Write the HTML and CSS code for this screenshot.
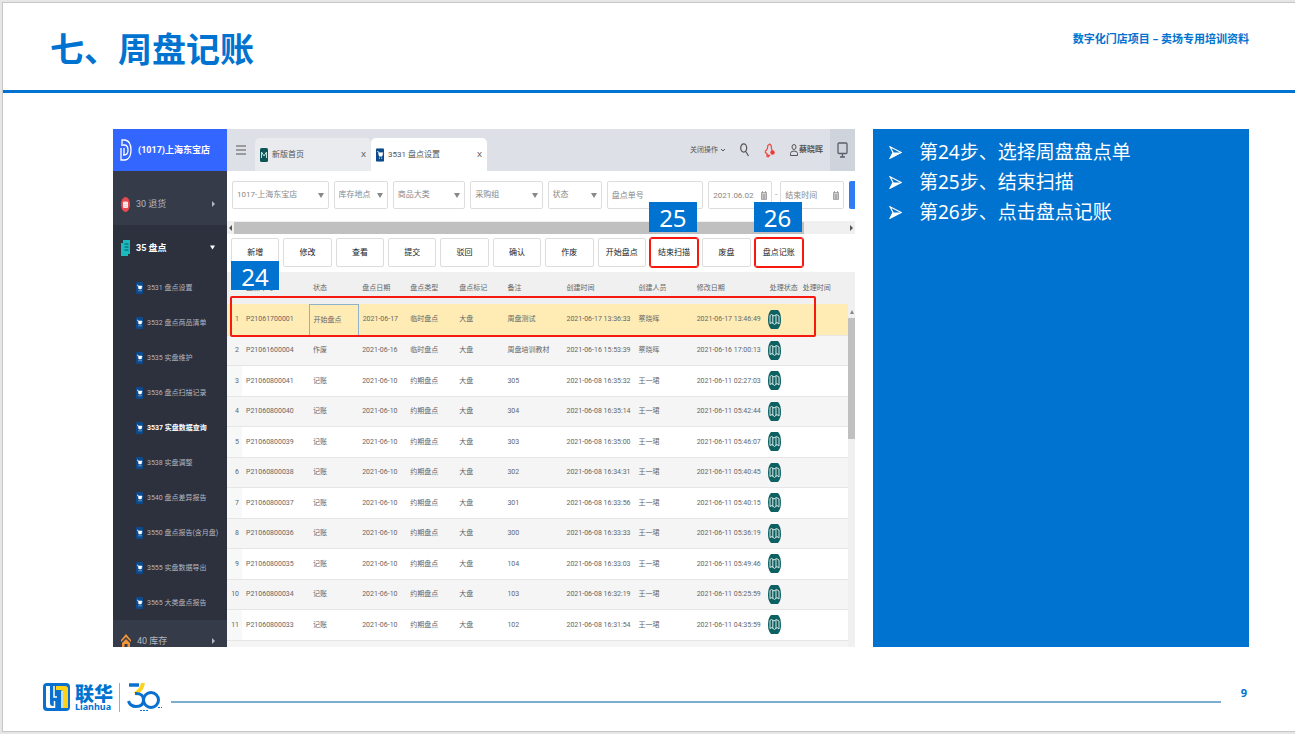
FILE: index.html
```html
<!DOCTYPE html>
<html lang="zh-CN">
<head>
<meta charset="utf-8">
<title>七、周盘记账</title>
<link rel="stylesheet" href="styles.css">
</head>
<body>
<svg class="sprite" aria-hidden="true">
  <symbol id="cart" viewBox="0 0 7 12"><rect width="7" height="12" rx="1" fill="#0d4a8c"/><path d="M1 3h1l.8 4h2.5L6 4H2.3" fill="#fff" stroke="#fff" stroke-width=".5"/><circle cx="3" cy="8.7" r=".5" fill="#fff"/><circle cx="5" cy="8.7" r=".5" fill="#fff"/></symbol>
  <symbol id="map" viewBox="0 0 13 19"><path d="M3 0h7q3 3 3 9.500t-3 9.500h-7q-3-3-3-9.500t3-9.500z" fill="#0e6163"/><path d="M2 5.500 3.500 4.500 6 6 8.500 4.500 11 6M2 13.500 4 12.500 6.500 14.500 9 12.500 11 14M2 5.500v8M4.800 5v8.500M8 5v8.500M11 6v8" fill="none" stroke="#d5e8e6" stroke-width="1"/></symbol>
  <symbol id="down" viewBox="0 0 6 5"><path d="M0 0h6L3 5z" fill="currentColor"/></symbol>
  <symbol id="right" viewBox="0 0 3 6"><path d="M0 0l3 3-3 3z" fill="currentColor"/></symbol>
  <symbol id="cal" viewBox="0 0 6 9"><path d="M.5 1.500h5v7h-5zM.5 3h5M1.500 0v2M4.500 0v2M.5 5h5M.5 7h5M2.200 3v5M3.800 3v5" fill="none" stroke="#888" stroke-width=".7"/></symbol>
  <symbol id="bullet" viewBox="0 0 13 13"><path d="M1 .7 12.300 6.500 1 12.300 4 6.500z" fill="none" stroke="#fff" stroke-width="1.200"/><path d="M4 6.500h8.300L1 12.300z" fill="#fff"/></symbol>
</svg>
<div class="slide">
  <header class="slide-head">
    <h1>七、周盘记账</h1>
    <p>数字化门店项目 – 卖场专用培训资料</p>
  </header>

  <main class="content">
    <section class="app" aria-label="盘点设置">
      <nav class="side">
        <div class="brand">
          <svg width="12" height="22" viewBox="0 0 12 22" fill="none" stroke="#fff" stroke-width="1.300"><path d="M2 5V1h3q6 1 6 10t-6 10H1V9"/><path d="M1 6h3q4 0 4 5t-4 5h-1M4 9v7"/></svg>
          <span>(1017)上海东宝店</span>
        </div>
        <a class="group first" href="#"><svg width="9" height="15" viewBox="0 0 9 15"><ellipse cx="4.500" cy="7.500" rx="4.500" ry="7.500" fill="#e8494f"/><path d="M2.500 5h4v5.500h-4zM2.500 6.500h4M2.500 8.500h4" fill="#f7c6c8" stroke="#fff" stroke-width=".8"/></svg><span>30 退货</span><svg class="caret" width="3" height="6"><use href="#right"/></svg></a>
        <a class="group open" href="#"><svg width="9" height="16" viewBox="0 0 9 16"><path d="M2 0h7v14H7v2H0V3h2z" fill="#19b9bd"/><path d="M3.500 4h4M3.500 7h4M3.500 10h4" stroke="#0c5560" stroke-width="1"/></svg><span>35 盘点</span><svg class="caret" width="5" height="5"><use href="#down"/></svg></a>
        <ul>
          <li><a href="#"><svg><use href="#cart"/></svg>3531 盘点设置</a></li>
          <li><a href="#"><svg><use href="#cart"/></svg>3532 盘点商品清单</a></li>
          <li><a href="#"><svg><use href="#cart"/></svg>3535 实盘维护</a></li>
          <li><a href="#"><svg><use href="#cart"/></svg>3536 盘点扫描记录</a></li>
          <li><a class="current" href="#"><svg><use href="#cart"/></svg>3537 实盘数据查询</a></li>
          <li><a href="#"><svg><use href="#cart"/></svg>3538 实盘调整</a></li>
          <li><a href="#"><svg><use href="#cart"/></svg>3540 盘点差异报告</a></li>
          <li><a href="#"><svg><use href="#cart"/></svg>3550 盘点报告(含月盘)</a></li>
          <li><a href="#"><svg><use href="#cart"/></svg>3555 实盘数据导出</a></li>
          <li><a href="#"><svg><use href="#cart"/></svg>3565 大类盘点报告</a></li>
        </ul>
        <a class="group last" href="#"><svg width="10" height="14" viewBox="0 0 10 14"><path d="M0 6 5 0l5 6v2L5 3 0 8zM1 9l4-4 4 4v5H6.500V10h-3v4H1z" fill="#f0953a"/></svg><span>40 库存</span><svg class="caret" width="3" height="6"><use href="#right"/></svg></a>
      </nav>

      <div class="work">
        <div class="tabs">
          <button class="icon-btn menu" aria-label="菜单"><svg width="10" height="10" viewBox="0 0 10 10" stroke="#555" stroke-width="1.200"><path d="M0 1h10M0 5h10M0 9h10"/></svg></button>
          <div class="tab"><svg width="8" height="14" viewBox="0 0 8 14"><rect width="8" height="14" rx="1.500" fill="#0e5558"/><path d="M1.500 10V4L4 8l2.500-4v6" fill="none" stroke="#bfe5e2" stroke-width="1"/></svg><span>新版首页</span><button aria-label="关闭 新版首页">X</button></div>
          <div class="tab active"><svg width="8" height="14" viewBox="0 0 7 12"><use href="#cart"/></svg><span>3531 盘点设置</span><button aria-label="关闭 盘点设置">X</button></div>
          <div class="tools">
            <button class="ops">关闭操作 <svg width="4" height="3" viewBox="0 0 4 3"><path d="M0 0l2 2 2-2" fill="none" stroke="#555"/></svg></button>
            <button class="icon-btn" aria-label="搜索"><svg width="9" height="14" viewBox="0 0 9 14" fill="none" stroke="#555" stroke-width="1.200"><ellipse cx="3.700" cy="5" rx="3" ry="4.200"/><path d="M5.800 8.500 8.500 13"/></svg></button>
            <button class="icon-btn" aria-label="通知"><svg width="11" height="15" viewBox="0 0 11 15"><path d="M.8 8.500q3-1.500 3-6l2-1.500 1.500 2q-.5 2 1 5M1 9l4 4 1-1M3 11.500v2l2 .5" fill="none" stroke="#f0453c" stroke-width="1.200"/><circle cx="8.500" cy="9.500" r="2.200" fill="#f0392f"/></svg></button>
            <button class="user"><svg width="8" height="12" viewBox="0 0 8 12" fill="none" stroke="#555"><ellipse cx="4" cy="3" rx="2" ry="2.500"/><path d="M.5 11.500V9.500q0-2.500 3.500-2.500t3.500 2.500v2z"/></svg>蔡晓晖</button>
            <button class="icon-btn screen" aria-label="屏幕"><svg width="11" height="16" viewBox="0 0 11 16" fill="none" stroke="#59606b" stroke-width="1.300"><rect x="1" y="1" width="9" height="10.500" rx="1"/><path d="M5.500 12v3M3 15h5"/></svg></button>
          </div>
        </div>

        <form class="filters">
          <label class="field w98"><select aria-label="门店"><option>1017-上海东宝店</option></select><svg width="6" height="5"><use href="#down"/></svg></label>
          <label class="field w54"><select aria-label="库存地点"><option>库存地点</option></select><svg width="6" height="5"><use href="#down"/></svg></label>
          <label class="field w73"><select aria-label="商品大类"><option>商品大类</option></select><svg width="6" height="5"><use href="#down"/></svg></label>
          <label class="field w73"><select aria-label="采购组"><option>采购组</option></select><svg width="6" height="5"><use href="#down"/></svg></label>
          <label class="field w54"><select aria-label="状态"><option>状态</option></select><svg width="6" height="5"><use href="#down"/></svg></label>
          <label class="field w98"><input type="text" aria-label="盘点单号" placeholder="盘点单号"></label>
          <label class="field w64"><input type="text" aria-label="开始时间" value="2021.06.02"><svg width="6" height="9"><use href="#cal"/></svg></label>
          <span class="dash">-</span>
          <label class="field w64"><input type="text" aria-label="结束时间" placeholder="结束时间"><svg width="6" height="9"><use href="#cal"/></svg></label>
          <button class="query" type="button" aria-label="查询"></button>
        </form>

        <div class="hscroll"><svg class="flip" width="3" height="6"><use href="#right"/></svg><i></i><svg width="3" height="6"><use href="#right"/></svg></div>

        <div class="actions">
          <button>新增</button><button>修改</button><button>查看</button><button>提交</button><button>驳回</button><button>确认</button><button>作废</button><button>开始盘点</button>
          <button class="marked">结束扫描<b class="step">25</b></button>
          <button>废盘</button>
          <button class="marked">盘点记账<b class="step">26</b></button>
        </div>

        <div class="grid">
          <table>
            <colgroup><col class="c15"><col class="c67"><col class="c49"><col class="c48"><col class="c49"><col class="c48"><col class="c59"><col class="c72"><col class="c58"><col class="c73"><col class="c33"><col class="c56"></colgroup>
            <thead><tr><th></th><th>盘点单号</th><th>状态</th><th>盘点日期</th><th>盘点类型</th><th>盘点标记</th><th>备注</th><th>创建时间</th><th>创建人员</th><th>修改日期</th><th>处理状态</th><th>处理时间</th></tr></thead>
            <tbody>
              <tr class="selected"><td>1</td><td>P21061700001</td><td class="focus">开始盘点</td><td>2021-06-17</td><td>临时盘点</td><td>大盘</td><td>周盘测试</td><td>2021-06-17 13:36:33</td><td>蔡晓晖</td><td>2021-06-17 13:46:49</td><td><svg><use href="#map"/></svg></td><td></td></tr>
              <tr><td>2</td><td>P21061600004</td><td>作废</td><td>2021-06-16</td><td>临时盘点</td><td>大盘</td><td>周盘培训教材</td><td>2021-06-16 15:53:39</td><td>蔡晓晖</td><td>2021-06-16 17:00:13</td><td><svg><use href="#map"/></svg></td><td></td></tr>
              <tr><td>3</td><td>P21060800041</td><td>记账</td><td>2021-06-10</td><td>约期盘点</td><td>大盘</td><td>305</td><td>2021-06-08 16:35:32</td><td>王一珺</td><td>2021-06-11 02:27:03</td><td><svg><use href="#map"/></svg></td><td></td></tr>
              <tr><td>4</td><td>P21060800040</td><td>记账</td><td>2021-06-10</td><td>约期盘点</td><td>大盘</td><td>304</td><td>2021-06-08 16:35:14</td><td>王一珺</td><td>2021-06-11 05:42:44</td><td><svg><use href="#map"/></svg></td><td></td></tr>
              <tr><td>5</td><td>P21060800039</td><td>记账</td><td>2021-06-10</td><td>约期盘点</td><td>大盘</td><td>303</td><td>2021-06-08 16:35:00</td><td>王一珺</td><td>2021-06-11 05:46:07</td><td><svg><use href="#map"/></svg></td><td></td></tr>
              <tr><td>6</td><td>P21060800038</td><td>记账</td><td>2021-06-10</td><td>约期盘点</td><td>大盘</td><td>302</td><td>2021-06-08 16:34:31</td><td>王一珺</td><td>2021-06-11 05:40:45</td><td><svg><use href="#map"/></svg></td><td></td></tr>
              <tr><td>7</td><td>P21060800037</td><td>记账</td><td>2021-06-10</td><td>约期盘点</td><td>大盘</td><td>301</td><td>2021-06-08 16:33:56</td><td>王一珺</td><td>2021-06-11 05:40:15</td><td><svg><use href="#map"/></svg></td><td></td></tr>
              <tr><td>8</td><td>P21060800036</td><td>记账</td><td>2021-06-10</td><td>约期盘点</td><td>大盘</td><td>300</td><td>2021-06-08 16:33:33</td><td>王一珺</td><td>2021-06-11 05:36:19</td><td><svg><use href="#map"/></svg></td><td></td></tr>
              <tr><td>9</td><td>P21060800035</td><td>记账</td><td>2021-06-10</td><td>约期盘点</td><td>大盘</td><td>104</td><td>2021-06-08 16:33:03</td><td>王一珺</td><td>2021-06-11 05:49:46</td><td><svg><use href="#map"/></svg></td><td></td></tr>
              <tr><td>10</td><td>P21060800034</td><td>记账</td><td>2021-06-10</td><td>约期盘点</td><td>大盘</td><td>103</td><td>2021-06-08 16:32:19</td><td>王一珺</td><td>2021-06-11 05:25:59</td><td><svg><use href="#map"/></svg></td><td></td></tr>
              <tr><td>11</td><td>P21060800033</td><td>记账</td><td>2021-06-10</td><td>约期盘点</td><td>大盘</td><td>102</td><td>2021-06-08 16:31:54</td><td>王一珺</td><td>2021-06-11 04:35:59</td><td><svg><use href="#map"/></svg></td><td></td></tr>
            </tbody>
          </table>
          <div class="vscroll"><svg width="4" height="4" viewBox="0 0 4 4"><path d="M0 4 2 0l2 4z" fill="#888"/></svg><i></i></div>
          <div class="row-mark"></div>
          <b class="step step-row">24</b>
        </div>
      </div>
    </section>

    <aside class="notes">
      <ul>
        <li><svg width="13" height="13"><use href="#bullet"/></svg>第24步、选择周盘盘点单</li>
        <li><svg width="13" height="13"><use href="#bullet"/></svg>第25步、结束扫描</li>
        <li><svg width="13" height="13"><use href="#bullet"/></svg>第26步、点击盘点记账</li>
      </ul>
    </aside>
  </main>

  <footer class="slide-foot">
    <svg width="27" height="28" viewBox="0 0 27 28"><rect x="1" y="1" width="25" height="26" rx="3" fill="#0a70d0" stroke="#0a70d0" stroke-width="2"/><path d="M3 3h4v17q0 3 3 3h1v2H5q-2 0-2-2z" fill="#fff"/><path d="M11 3v11h3" fill="none" stroke="#fff" stroke-width="1.500"/><path d="M13 3h9q3 0 3 3v19h-5V10q0-3-3-3h-4z" fill="#ffd21a"/><path d="M11.500 18v7M19 8v17" fill="none" stroke="#fff" stroke-width="1.500"/></svg>
    <div class="logo-text"><strong>联华</strong><span>Lianhua</span></div>
    <svg class="thirty" width="35" height="28" viewBox="0 0 35 28" fill="none"><path d="M2 2h10" stroke="#0a70d0" stroke-width="3.500"/><path d="M16 0q-1 7-8 11" stroke="#ffd21a" stroke-width="4"/><path d="M8 10.500q8.500-.5 8.500 6.500 0 6.500-7.500 6.500-6 0-7.500-5.500" stroke="#0a70d0" stroke-width="3"/><circle cx="24" cy="17" r="7.500" stroke="#0a70d0" stroke-width="3"/><path d="M31 24.500h4M13 27.500h8" stroke="#0a70d0" stroke-width="1" stroke-dasharray="2 1"/></svg>
    <hr>
    <span class="page-no">9</span>
  </footer>
</div>
</body>
</html>
```
FILE: styles.css
```css
* { box-sizing: border-box; }
body {
  margin: 0;
  padding: 2px 0 2px 2px;
  min-height: 100vh;
  display: flex;
  background: #e6e6e6;
  color: #666;
  font-family: "Noto Sans", "Noto Sans CJK SC", sans-serif;
}
.sprite { position: absolute; width: 0; height: 0; }
svg { display: block; flex: none; }
ul { list-style: none; margin: 0; padding: 0; }
a { color: inherit; text-decoration: none; }
button, input, select { font: inherit; color: inherit; margin: 0; padding: 0; border: 0; background: none; white-space: nowrap; }

.slide { flex: 1; min-width: 0; display: flex; flex-direction: column; background: #fff; border: 1px solid #c6c6c6; border-right: 0; }
.slide-head { display: flex; justify-content: space-between; align-items: flex-start; height: 90px; padding: 21px 46px 0 47px; border-bottom: 3px solid #0072d0; color: #0072d0; }
.slide-head h1 { margin: 0; font: bold 34px/48px "Noto Sans CJK SC", sans-serif; }
.slide-head p { margin: 7px 0 0; font-size: 11px; font-weight: bold; line-height: 16px; }

.content { flex: 1; display: flex; gap: 18px; padding: 36px 46px 0 110px; }
.app { flex: 742 1 0; min-width: 0; display: flex; height: 518px; overflow: hidden; font: 8px/12px Roboto, "Noto Sans CJK SC", sans-serif; }
.notes { flex: 376 1 0; min-width: 0; background: #0072d0; color: #fff; }
.notes ul { padding: 8px 16px; }
.notes li { display: flex; align-items: center; gap: 17px; font-size: 19px; line-height: 30px; height: 30px; white-space: nowrap; }

.side { flex: none; width: 114px; background: #2d303d; color: #b4b7bf; white-space: nowrap; }
.brand { display: flex; align-items: center; gap: 6px; height: 42px; padding-left: 7px; background: #3366ff; color: #fff; font-size: 9px; font-weight: bold; }
.group { display: flex; align-items: center; gap: 6px; height: 45px; padding: 0 12px 0 8px; font-size: 9px; }
.first { height: 54px; padding-top: 12px; background: #363b49; }
.last { height: 42px; background: #363b49; }
.open { color: #fff; font-weight: bold; }
.caret { margin-left: auto; }
.side li a { display: flex; align-items: center; gap: 4px; height: 35px; padding-left: 23px; font-size: 7px; }
.side li svg { width: 7px; height: 12px; }
.side .current { color: #fff; font-weight: bold; }

.work { flex: 1; min-width: 0; display: flex; flex-direction: column; background: #fff; }
.tabs { display: flex; align-items: flex-end; height: 42px; background: #dde0e6; color: #555; }
.icon-btn { display: grid; place-items: center; }
.menu { width: 28px; height: 42px; }
.tab { flex: 0 1 116px; display: flex; align-items: center; gap: 4px; height: 33px; padding: 0 5px; border-radius: 5px 5px 0 0; background: #e9ebef; white-space: nowrap; }
.tab button { margin-left: auto; }
.active { background: #fff; }
.tools { display: flex; align-items: center; gap: 15px; height: 42px; margin-left: auto; }
.ops, .user { display: flex; align-items: center; gap: 3px; }
.ops { font-size: 7px; }
.user { font-size: 8px; font-weight: bold; gap: 1px; margin-right: -8px; }
.screen { width: 25px; height: 42px; background: #ced3dc; }

.filters { display: flex; align-items: center; gap: 5px; height: 48px; padding: 0 0 0 5px; color: #888; }
.field { min-width: 0; display: flex; align-items: center; height: 28px; border: 1px solid #ddd; border-radius: 2px; }
.field select, .field input { flex: 1; min-width: 0; width: 0; height: 26px; margin-left: 4px; appearance: none; outline: 0; }
.field svg { margin-right: 4px; }
.field ::placeholder { color: #888; opacity: 1; }
.w98 { flex: 98 1 0; }
.w73 { flex: 73 1 0; }
.w64 { flex: 64 1 0; }
.w54 { flex: 54 1 0; }
.dash { margin: 0 -2px; line-height: 28px; }
.query { flex: none; width: 6px; height: 28px; background: #2f7bf6; border-radius: 2px 0 0 2px; }

.hscroll { display: flex; align-items: center; gap: 2px; height: 15px; padding: 0 2px; border-top: 2px solid #fff; background: #f0f0f0; color: #555; }
.hscroll i { flex: 1; height: 12px; background: #c0c0c0; margin-right: 44px; }
.flip { transform: rotate(180deg); }

.actions { display: flex; gap: 4px; height: 38px; padding: 4px 52px 0 4px; color: #222; }
.actions button { position: relative; flex: 1 1 0; min-width: 0; height: 29px; border: 1px solid #ddd; border-radius: 2px; }
.actions .marked { border-color: #f5190f; outline: 1px solid #f5190f; }
.step { position: absolute; width: 48px; height: 30px; background: #0072d0; color: #fff; font: 24px/31px "Noto Sans", sans-serif; text-align: center; }
.marked .step { left: -2px; bottom: 34px; }

.grid { position: relative; flex: 1; min-height: 0; background: #f5f5f5; }
table { width: 100%; table-layout: fixed; border-collapse: collapse; font-size: 7px; }
th { height: 32px; padding: 0 0 0 4px; background: #f0f0f0; font-weight: normal; text-align: left; white-space: nowrap; }
td { height: 31px; padding: 0 0 0 4px; background: #fff; border-bottom: 1px solid #e6e6e6; white-space: nowrap; }
tr:nth-child(even) td { height: 30px; background: #f5f5f5; }
td:first-child { padding: 0 3px 0 0; text-align: right; background: #f7f8f8; }
.selected td, .selected td:first-child { background: #ffecb5; }
.selected .focus { border: 1px solid #8fb2cc; }
td svg { width: 13px; height: 19px; margin-left: -2px; }
.c15 { width: 15px; }
.c33 { width: 33px; }
.c48 { width: 48px; }
.c49 { width: 49px; }
.c56 { width: 56px; }
.c58 { width: 58px; }
.c59 { width: 59px; }
.c67 { width: 67px; }
.c72 { width: 72px; }
.c73 { width: 73px; }
.vscroll { position: absolute; right: 0; top: 32px; bottom: 0; width: 7px; padding-top: 6px; background: #f0f0f0; display: flex; flex-direction: column; align-items: center; gap: 4px; }
.vscroll i { width: 7px; height: 121px; background: #c0c0c0; }
.row-mark { position: absolute; left: 3px; right: 39px; top: 24px; height: 41px; border: 2px solid #f5190f; border-radius: 2px; }
.step-row { left: 4px; top: -11px; height: 29px; }

.slide-foot { display: flex; align-items: center; height: 84px; padding: 20px 48px 4px 40px; color: #0072d0; }
.logo-text { display: flex; flex-direction: column; padding: 0 6px 0 5px; border-right: 1px solid #8fb4d2; }
.logo-text strong { font: 900 19px/19px "Noto Sans CJK SC", sans-serif; }
.logo-text span { font: bold 9px/10px "Noto Sans", sans-serif; }
.thirty { margin-left: 7px; }
.slide-foot hr { flex: 1; margin: 10px 20px 0 9px; height: 2px; border: 0; background: #7fadd0; }
.page-no { margin-bottom: 10px; font-size: 11px; font-weight: bold; }
```
